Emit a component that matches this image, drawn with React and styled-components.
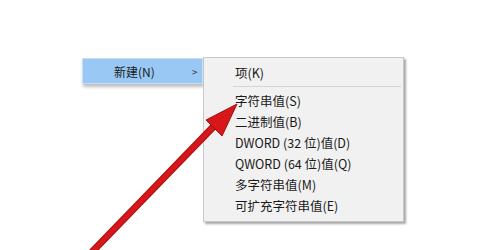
import React from "react";
import styled, { createGlobalStyle } from "styled-components";

const subItems = [
  "字符串值(S)",
  "二进制值(B)",
  "DWORD (32 位)值(D)",
  "QWORD (64 位)值(Q)",
  "多字符串值(M)",
  "可扩充字符串值(E)",
];

const GlobalStyle = createGlobalStyle`
  html, body {
    margin: 0;
    padding: 0;
    background: #fff;
  }
  body {
    font-family: "Noto Sans CJK SC", "Noto Sans", sans-serif;
  }
`;

const Page = styled.div`
  position: relative;
  width: 500px;
  height: 250px;
  overflow: hidden;
  background: #fff;
`;

const MenuRow = styled.div`
  display: flex;
  align-items: flex-start;
  padding: 57px 0 0 82px;
`;

const ParentMenu = styled.div`
  margin-top: 1px;
  box-shadow: 1px 3px 3px rgba(0, 0, 0, 0.25);
`;

const ParentItem = styled.div`
  display: flex;
  align-items: center;
  width: 119px;
  height: 24px;
  background: #98c8f3;
  border: 1px solid #c4e0f8;
  font-size: 12px;
  color: #1a1a1a;
`;

const ParentLabel = styled.span`
  margin-left: 31px;
  flex: 1;
`;

const Chevron = styled.span`
  width: 10px;
  font-size: 10px;
  color: #333;
`;

const SubMenu = styled.div`
  width: 199px;
  padding: 4px 0 5px;
  background: #f1f1f1;
  border: 1px solid #c8c8c8;
  box-shadow: 2px 2px 2px rgba(0, 0, 0, 0.35);
`;

const SubItem = styled.div`
  height: 21px;
  line-height: 21px;
  padding-left: 31px;
  font-size: 12.5px;
  color: #1a1a1a;
  white-space: nowrap;
`;

const Separator = styled.div`
  height: 1px;
  margin: 3px 2px 3px 29px;
  background: #d4d4d4;
`;

const Overlay = styled.svg`
  position: absolute;
  left: 0;
  top: 0;
  pointer-events: none;
`;

function Arrow() {
  return (
    <Overlay width="500" height="250" viewBox="0 0 500 250">
      <line x1="90" y1="254" x2="217" y2="123" stroke="#a80d0d" strokeWidth="7" />
      <line x1="90" y1="254" x2="217" y2="123" stroke="#d8171b" strokeWidth="5" />
      <polygon points="237,104 206,120 222,136" fill="#d8171b" stroke="#a80d0d" strokeWidth="1" strokeLinejoin="round" />
    </Overlay>
  );
}

export default function App() {
  return (
    <Page>
      <GlobalStyle />
      <MenuRow>
        <ParentMenu>
          <ParentItem>
            <ParentLabel>新建(N)</ParentLabel>
            <Chevron>&gt;</Chevron>
          </ParentItem>
        </ParentMenu>
        <SubMenu>
          <SubItem>项(K)</SubItem>
          <Separator />
          {subItems.map((label) => (
            <SubItem key={label}>{label}</SubItem>
          ))}
        </SubMenu>
      </MenuRow>
      <Arrow />
    </Page>
  );
}
